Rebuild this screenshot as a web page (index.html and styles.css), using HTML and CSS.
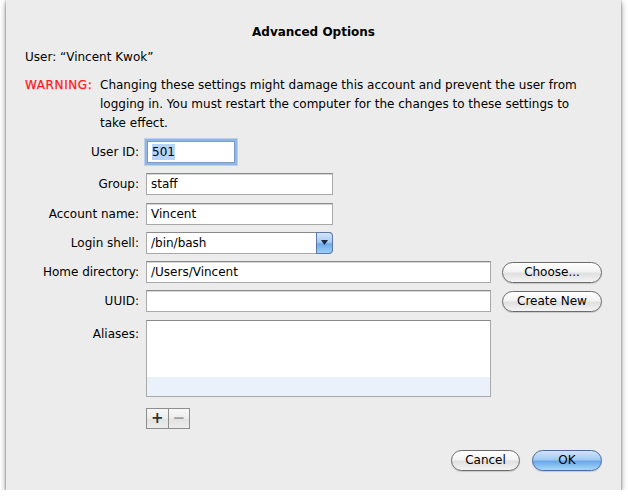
FILE: index.html
```html
<!DOCTYPE html>
<html>
<head>
<meta charset="utf-8">
<link rel="stylesheet" href="styles.css">
</head>
<body>
<div class="sheet">
  <h1 class="title">Advanced Options</h1>
  <p class="user">User: “Vincent Kwok”</p>
  <div class="warning">
    <span class="warn-label">WARNING:</span>
    <span class="warn-text">Changing these settings might damage this account and prevent the user from logging in. You must restart the computer for the changes to these settings to take effect.</span>
  </div>
  <div class="form">
    <label class="lbl first">User ID:</label>
    <div class="field short focus first"><span class="sel">501</span></div>
    <div></div>

    <label class="lbl">Group:</label>
    <div class="field mid">staff</div>
    <div></div>

    <label class="lbl">Account name:</label>
    <div class="field mid">Vincent</div>
    <div></div>

    <label class="lbl">Login shell:</label>
    <div class="popup"><span class="popup-text">/bin/bash</span><span class="popup-arrow"><svg width="7" height="5" viewBox="0 0 7 5"><path d="M0 0H7L3.5 5Z" fill="#1a2a40"/></svg></span></div>
    <div></div>

    <label class="lbl">Home directory:</label>
    <div class="field">/Users/Vincent</div>
    <button class="btn">Choose...</button>

    <label class="lbl">UUID:</label>
    <div class="field"></div>
    <button class="btn">Create New</button>

    <label class="lbl top">Aliases:</label>
    <div class="list"><div class="list-band"></div></div>
    <div></div>

    <div></div>
    <div class="seg"><span class="seg-btn plus">+</span><span class="seg-btn minus">−</span></div>
    <div></div>
  </div>
  <div class="actions">
    <button class="btn cancel">Cancel</button>
    <button class="btn ok">OK</button>
  </div>
</div>
</body>
</html>
```
FILE: styles.css
```css
html, body {
  margin: 0;
  padding: 0;
  background: #ffffff;
}
body {
  font-family: "Lucida Grande", "DejaVu Sans", sans-serif;
  font-size: 12px;
  color: #000;
}
.sheet {
  margin-left: 6px;
  width: 615px;
  height: 490px;
  box-sizing: border-box;
  background: #ececec;
  box-shadow: 0 3px 6px rgba(0,0,0,0.45), 0 0 2px rgba(0,0,0,0.4);
  padding: 24px 19px 0 19px;
  position: relative;
}
.title {
  margin: 0;
  font-size: 12px;
  font-weight: bold;
  text-align: center;
  line-height: 16px;
}
.user {
  margin: 9px 0 0 0;
  line-height: 16px;
}
.warning {
  display: flex;
  margin-top: 11px;
  line-height: 19px;
}
.warn-label {
  color: #ff1a1a;
  flex: 0 0 75px;
  letter-spacing: 0.6px;
  -webkit-text-stroke: 0.25px #ff1a1a;
}
.warn-text {
  flex: 1;
  padding-right: 6px;
}
.form {
  display: grid;
  grid-template-columns: 114px 345px 100px;
  column-gap: 7px;
  row-gap: 7.3px;
  margin-top: 8px;
  align-items: center;
}
.form > :nth-child(3n) {
  margin-left: 4px;
}
.first {
  margin-bottom: 3px;
}
.lbl {
  text-align: right;
  line-height: 22px;
}
.lbl.top {
  align-self: start;
  line-height: 28px;
}
.field {
  height: 22px;
  box-sizing: border-box;
  background: #fff;
  border: 1px solid #a9a9a9;
  border-top-color: #8a8a8a;
  box-shadow: inset 0 1px 0 #d6d6d6;
  padding: 0 4px;
  line-height: 20px;
}
.field.mid { width: 187px; }
.field.short {
  width: 88px;
  margin-left: 1px;
}
.field.focus {
  border-color: #7d9ec4;
  box-shadow: 0 0 0 2px #8fb6e4, 0 0 0 3px rgba(140,180,230,0.5);
}
.sel {
  background: #b5d5ff;
  padding: 1px 0;
}
.popup {
  width: 187px;
  height: 22px;
  box-sizing: border-box;
  display: flex;
  background: #fff;
  border: 1px solid #a9a9a9;
  border-top-color: #8a8a8a;
  border-radius: 0 4px 4px 0;
}
.popup-text {
  flex: 1;
  padding: 0 4px;
  line-height: 20px;
}
.popup-arrow {
  width: 15px;
  margin: -1px -1px -1px 0;
  border: 1px solid #5c78a8;
  border-radius: 0 4px 4px 0;
  background: linear-gradient(#d4e6fa 0%, #a6ccf2 45%, #6fa9e8 55%, #9bd0f8 100%);
  display: flex;
  align-items: center;
  justify-content: center;
}
.list {
  height: 77px;
  box-sizing: border-box;
  background: #fff;
  border: 1px solid #a9a9a9;
  border-top-color: #8a8a8a;
  display: flex;
  flex-direction: column;
  justify-content: flex-end;
}
.list-band {
  height: 19px;
  background: #ebf1fb;
}
.seg {
  display: flex;
  margin-top: 4px;
  width: 44px;
  height: 21px;
  box-sizing: border-box;
  border: 1px solid #8e8e8e;
  background: linear-gradient(#f7f7f7, #ededed 50%, #e2e2e2 51%, #ececec);
}
.seg-btn {
  flex: 1;
  display: flex;
  align-items: center;
  justify-content: center;
  font-weight: bold;
  font-size: 15px;
  line-height: 19px;
}
.plus {
  border-right: 1px solid #8e8e8e;
  color: #333;
}
.minus {
  color: #a0a0a0;
}
.btn {
  font-family: inherit;
  font-size: 12px;
  height: 21px;
  box-sizing: border-box;
  border: 1px solid #6b6b6b;
  border-radius: 11px;
  background: linear-gradient(#ffffff 0%, #f3f3f3 45%, #e0e0e0 55%, #f4f4f4 100%);
  box-shadow: 0 1px 1px rgba(0,0,0,0.15);
  padding: 0;
  line-height: 19px;
  color: #000;
  width: 100px;
}
.actions {
  display: flex;
  justify-content: flex-end;
  gap: 12px;
  margin-top: 21px;
}
.btn.cancel { width: 69px; }
.btn.ok {
  width: 70px;
  border-color: #4a6aa0;
  background: linear-gradient(#cfe4fb 0%, #a2cbf3 45%, #6aa8ea 55%, #a6d8fb 100%);
}
```
